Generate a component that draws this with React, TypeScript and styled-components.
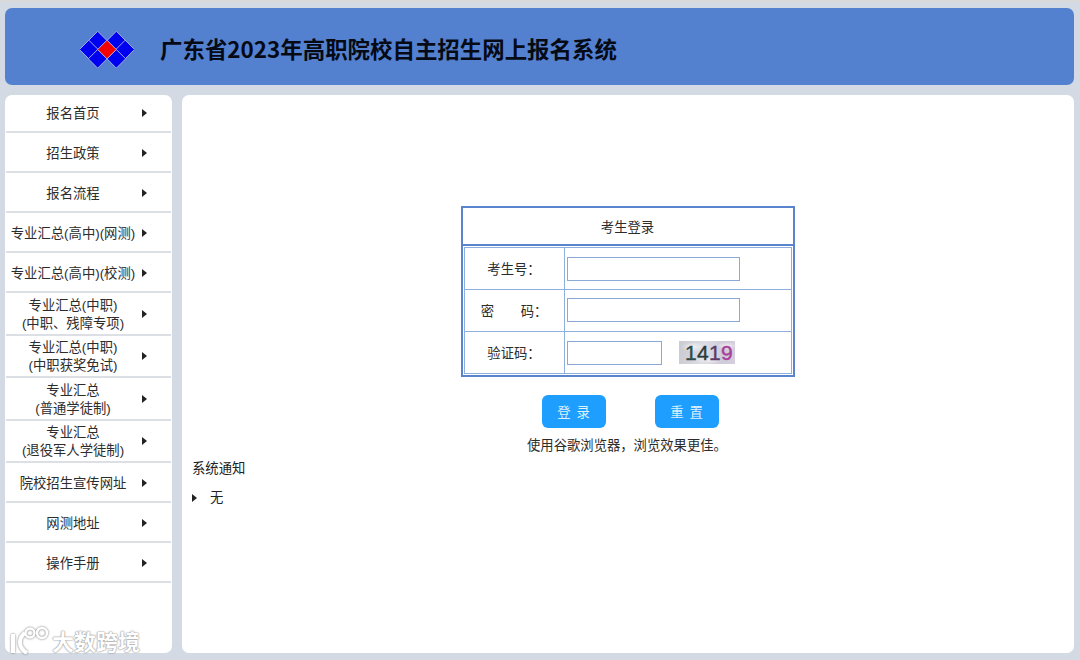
import React from "react";
import styled, { createGlobalStyle } from "styled-components";

const Global = createGlobalStyle`
  html, body { margin: 0; padding: 0; background: #d3dae3; }
  body { font-family: "Liberation Sans", "Noto Sans CJK SC", sans-serif; color: #222; }
  * { box-sizing: border-box; }
`;
const Page = styled.div`
  position: relative; width: 1080px; height: 660px; overflow: hidden;
  background: #d3dae3; border-top: 2px solid #d9d9d9;
  padding: 6px 6px 7px 5px; display: flex; flex-direction: column; gap: 10px;
`;
const Header = styled.header`
  height: 77px; flex: none; background: #5480d0; border-radius: 7px;
  display: flex; align-items: center; padding-left: 75px;
`;
const Logo = styled.svg`width: 54px; height: 38px; flex: none; margin: 4px 26px 0 0;`;
const Title = styled.h1`
  margin: 2px 0 0; font-size: 22.45px; line-height: 30px; font-weight: 700; color: #050a14;
  font-family: "Noto Sans CJK SC", sans-serif;
`;
const Body = styled.div`flex: 1; display: flex; gap: 10px; min-height: 0;`;
const Side = styled.nav`
  width: 167px; flex: none; background: #fff; border-radius: 7px; padding: 0 1px;
`;
const Item = styled.a<{ $two?: boolean }>`
  display: grid; grid-template-columns: 134px 1fr; align-items: center;
  height: ${(p) => (p.$two ? "42.5px" : "40px")};
  border-bottom: 2px solid #dcdfe3;
  font-size: 13.33px; line-height: 18px; color: #2c2c2c; text-align: center;
  padding-top: 3px;
  &:first-child { height: 38px; padding-top: 1px; }
`;
const Arrow = styled.i`
  display: block; width: 0; height: 0; margin-left: 2px; position: relative; top: -1px;
  border-left: 5px solid #222; border-top: 4px solid transparent; border-bottom: 4px solid transparent;
`;
const Main = styled.main`
  flex: 1; background: #fff; border-radius: 7px; padding: 111px 10px 0;
`;
const Box = styled.div`
  width: 334px; margin: 0 0 0 269px; height: 171px;
  border: 2px solid #5b84ce; display: flex; flex-direction: column; background: #fff;
`;
const BoxTitle = styled.div`
  height: 38px; flex: none; display: flex; align-items: center; justify-content: center;
  font-size: 13.33px; color: #2c2c2c; border-bottom: 2px solid #5b84ce; padding-right: 1px;
`;
const Grid = styled.div`
  flex: 1; margin: 1px; border: 1px solid #8fb0dc;
  display: grid; grid-template-columns: 100px 1fr; grid-template-rows: 42px 42px 1fr;
`;
const Label = styled.div<{ $last?: boolean }>`
  display: flex; align-items: center; justify-content: center;
  font-size: 13.33px; color: #2c2c2c; padding-right: 1px;
  border-right: 1px solid #8fb0dc;
  border-bottom: ${(p) => (p.$last ? "none" : "1px solid #8fb0dc")};
`;
const Value = styled.div<{ $last?: boolean; $lift?: boolean }>`
  display: flex; align-items: center; padding-left: 2px;
  padding-bottom: ${(p) => (p.$lift ? "2px" : "0")};
  border-bottom: ${(p) => (p.$last ? "none" : "1px solid #8fb0dc")};
`;
const Field = styled.input<{ $short?: boolean }>`
  width: ${(p) => (p.$short ? "95px" : "173px")}; height: 24px; padding: 0;
  border: 1px solid #8ba9d6; background: #fff; outline: none; flex: none;
`;
const Captcha = styled.div`
  width: 56px; height: 23px; margin-left: 17px; flex: none; overflow: hidden; padding-left: 6px;
  background:
    radial-gradient(ellipse 12px 5px at 14px 6px, #f2f2f4, transparent),
    radial-gradient(ellipse 14px 4px at 30px 19px, #eeeef2, transparent),
    radial-gradient(ellipse 10px 4px at 48px 5px, #f0edf2, transparent),
    linear-gradient(100deg, #c9cad2, #dcdce3 45%, #cfcbd8 75%, #d6cede);
  font: 400 21px/23px "Liberation Sans", sans-serif; color: #2f4646; letter-spacing: 0.3px;
  -webkit-text-stroke: 0.4px currentColor;
`;
const Digit = styled.span<{ $c: string }>`color: ${(p) => p.$c};`;
const Buttons = styled.div`
  margin: 18px 0 0 350px; display: flex; gap: 49px;
`;
const Btn = styled.button`
  width: 64px; height: 33px; background: #1e9fff; border: 0; border-radius: 6px; padding: 0;
  color: #dff1ff; font: 13.33px "Noto Sans CJK SC", sans-serif; letter-spacing: 6px; text-indent: 5px;
`;
const Hint = styled.p`
  margin: 9px 0 0 335px; font-size: 13.33px; line-height: 18px; color: #2c2c2c;
`;
const NoticeHead = styled.div`margin-top: 5px; font-size: 13.33px; line-height: 18px; color: #222;`;
const NoticeRow = styled.div`
  margin-top: 11px; display: flex; align-items: center; font-size: 13.33px; line-height: 18px; color: #222;
  ${Arrow} { margin: 0 13px 0 0; top: 0; }
`;
const Mark = styled.div`
  position: absolute; left: 8px; top: 623px; display: flex; align-items: center; gap: 2px;
  color: #fff; font: 700 22px/30px "Noto Sans CJK SC", sans-serif;
  text-shadow: 0 0 2px #8f8f8f, 0 0 1px #808080; pointer-events: none;
`;
const MarkLogo = styled.svg`width: 42px; height: 28px; filter: drop-shadow(0 0 1px #777);`;

const cell = (x: number, y: number) =>
  `M${x} ${y - 9.5}L${x + 9.5} ${y}L${x} ${y + 9.5}L${x - 9.5} ${y}Z`;

const menu: { a: string; b?: string }[] = [
  { a: "报名首页" }, { a: "招生政策" }, { a: "报名流程" },
  { a: "专业汇总(高中)(网测)" }, { a: "专业汇总(高中)(校测)" },
  { a: "专业汇总(中职)", b: "(中职、残障专项)" },
  { a: "专业汇总(中职)", b: "(中职获奖免试)" },
  { a: "专业汇总", b: "(普通学徒制)" },
  { a: "专业汇总", b: "(退役军人学徒制)" },
  { a: "院校招生宣传网址" }, { a: "网测地址" }, { a: "操作手册" },
];

export default function App() {
  const blue: [number, number][] = [[17, 9.5], [8, 18.5], [17, 28], [36, 9.5], [45, 18.5], [36, 28]];
  return (
    <Page>
      <Global />
      <Header>
        <Logo viewBox="-1 -1 55 38">
          {blue.map(([x, y], i) => (
            <path key={i} d={cell(x, y)} fill="#0000f0" stroke="#a9b4ee" strokeWidth="0.9" />
          ))}
          <path d={cell(26.5, 18.5)} fill="#f50000" stroke="#a9b4ee" strokeWidth="0.9" />
        </Logo>
        <Title>广东省2023年高职院校自主招生网上报名系统</Title>
      </Header>
      <Body>
        <Side>
          {menu.map((m, i) => (
            <Item key={i} $two={!!m.b}>
              <span>{m.a}{m.b && <br />}{m.b}</span>
              <Arrow />
            </Item>
          ))}
        </Side>
        <Main>
          <Box>
            <BoxTitle>考生登录</BoxTitle>
            <Grid>
              <Label>考生号：</Label>
              <Value><Field /></Value>
              <Label>密&emsp;&emsp;码：</Label>
              <Value $lift><Field type="password" /></Value>
              <Label $last>验证码：</Label>
              <Value $last>
                <Field $short />
                <Captcha>
                  <Digit $c="#2f4a48">1</Digit><Digit $c="#2b3a3a">4</Digit><Digit $c="#5a3a68">1</Digit><Digit $c="#a8409a">9</Digit>
                </Captcha>
              </Value>
            </Grid>
          </Box>
          <Buttons>
            <Btn>登录</Btn>
            <Btn>重置</Btn>
          </Buttons>
          <Hint>使用谷歌浏览器，浏览效果更佳。</Hint>
          <NoticeHead>系统通知</NoticeHead>
          <NoticeRow><Arrow />无</NoticeRow>
        </Main>
      </Body>
      <Mark>
        <MarkLogo viewBox="0 0 42 28" fill="none" stroke="#fff" strokeWidth="4">
          <path d="M5 8v19M17 7c-7 5-7 15 2 20" />
          <circle cx="22" cy="7" r="4.5" strokeWidth="2.4" />
          <circle cx="34" cy="7" r="5" strokeWidth="2.4" />
        </MarkLogo>
        <span>大数跨境</span>
      </Mark>
    </Page>
  );
}
